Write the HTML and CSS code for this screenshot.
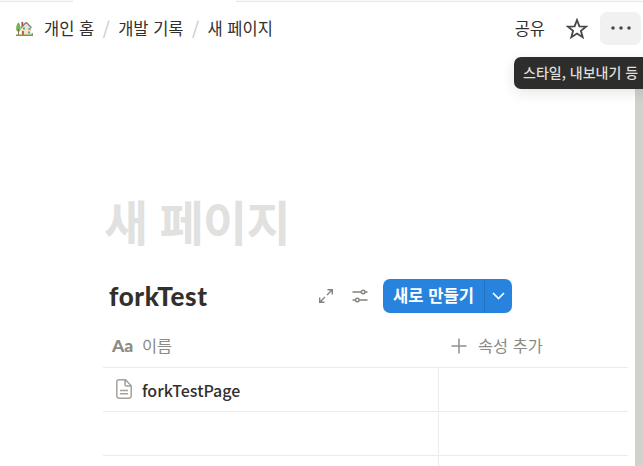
FILE: index.html
```html
<!DOCTYPE html>
<html lang="ko">
<head>
<meta charset="utf-8">
<title>새 페이지</title>
<link rel="stylesheet" href="styles.css">
</head>
<body>
<div class="window">
  <div class="tabs"><span class="tab tab-left"></span><span class="tab tab-right"></span></div>
  <header class="topbar">
    <nav class="crumbs">
      <svg class="house" width="18" height="16" viewBox="0 0 18 16">
        <path d="M5.500 1h1.700v4H5.500z" fill="#a43c55"/>
        <path d="M5 14V7l5-5 5 5v7z" fill="#fbe3b5"/>
        <path d="M5 7l4.500-5h1.500l4.500 5" fill="none" stroke="#78858b" stroke-width="1.300"/>
        <path d="M2.500 1.500C.5 3-.2 6 .3 9c.5 2 3.700 2 4.200 0C5 6 4 3 2.500 1.500z" fill="#77b255"/>
        <path d="M2.500 8v6" stroke="#8a6945"/>
        <path d="M6 10h2v4H6z" fill="#d35c4c"/>
        <path d="M7 6.500h2v2H7zM12.500 7h2v2h-2zM12 10.500h2v2h-2z" fill="#42a5ee"/>
        <path d="M0 13.500h17v1.500H0z" fill="#6ba24c"/>
        <path d="M15.500 12H17v2h-1.500z" fill="#77b255"/>
      </svg>
      <span class="crumb">개인 홈</span><span class="slash">/</span>
      <span class="crumb">개발 기록</span><span class="slash">/</span>
      <span class="crumb">새 페이지</span>
    </nav>
    <div class="actions">
      <span class="share">공유</span>
      <svg class="star" width="22" height="22" viewBox="0 0 22 22"><path d="M11 2l2.400 6.300 6.800.3-5.300 4.200 1.800 6.500L11 15.600l-5.700 3.700 1.800-6.500L1.800 8.600l6.800-.3z" fill="none" stroke="#484743" stroke-width="1.800"/></svg>
      <button class="more" aria-label="더 보기"><svg width="20" height="4" viewBox="0 0 20 4" fill="#4b4a46"><circle cx="2" cy="2" r="1.800"/><circle cx="10" cy="2" r="1.800"/><circle cx="18" cy="2" r="1.800"/></svg></button>
    </div>
    <div class="tooltip">스타일, 내보내기 등</div>
  </header>
  <main class="page">
    <h1>새 페이지</h1>
    <section class="database">
      <div class="toolbar">
        <h2>forkTest</h2>
        <svg class="expand" width="16" height="16" viewBox="0 0 16 16" fill="none" stroke="#85837e" stroke-width="1.400"><path d="M9.500 1.700h4.800v4.800M14 2 9 7M1.700 9.500v4.800h4.800M2 14l5-5"/></svg>
        <svg class="settings" width="16" height="14" viewBox="0 0 16 14" fill="none" stroke="#85837e" stroke-width="1.400"><path d="M.5 3h8.700M13 3h2.500M.5 11h3M7.200 11h8.300"/><circle cx="11.100" cy="3" r="1.800"/><circle cx="5.300" cy="11" r="1.800"/></svg>
        <div class="new"><span class="label">새로 만들기</span><span class="drop"><svg width="13" height="8" viewBox="0 0 13 8"><path d="M1 1l5.500 5.500L12 1" fill="none" stroke="#fff" stroke-width="1.700"/></svg></span></div>
      </div>
      <div class="row head">
        <div class="cell"><span class="aa">Aa</span><span class="name">이름</span></div>
        <div class="cell add"><svg width="16" height="16" viewBox="0 0 16 16"><path d="M8 .5v15M.5 8h15" stroke="#91908b" stroke-width="1.500"/></svg><span>속성 추가</span></div>
      </div>
      <div class="row">
        <div class="cell"><svg class="doc" width="16" height="20" viewBox="0 0 16 20" fill="none" stroke="#a5a29a" stroke-width="1.500"><path d="M3 .8h6.500l5.700 6V17a2.200 2.200 0 0 1-2.200 2.200H3A2.200 2.200 0 0 1 .8 17V3A2.200 2.200 0 0 1 3 .8zM9 1v4.500a1.500 1.500 0 0 0 1.500 1.500H15M4 11.500h8M4 14.700h8"/></svg><span class="title">forkTestPage</span></div>
        <div class="cell"></div>
      </div>
      <div class="row"><div class="cell"></div><div class="cell"></div></div>
      <div class="row"><div class="cell"></div><div class="cell"></div></div>
    </section>
  </main>
  <div class="scrollbar"></div>
</div>
</body>
</html>
```
FILE: styles.css
```css
* { box-sizing: border-box; }
body { margin: 0; background: #fff; font-family: "Noto Sans CJK KR", sans-serif; color: #32302c; }
.window { position: relative; width: 643px; height: 466px; overflow: hidden; }
.tabs { display: flex; justify-content: space-between; height: 2px; }
.tab { background: #f7f7f6; border-bottom: 1px solid #e8e8e7; }
.tab-left { width: 73px; }
.tab-right { width: 407px; }
.topbar { position: relative; display: flex; justify-content: space-between; height: 53px; padding: 0 2px 0 16px; }
.crumbs, .actions { display: flex; align-items: center; height: 53px; font-size: 16.5px; line-height: 24px; white-space: nowrap; }
.crumb, .share { padding-bottom: 2px; }
.house { margin-right: 10px; }
.slash { width: 24px; padding-bottom: 2px; text-align: center; color: #c9c8c5; font-size: 18px; }
.share { margin-right: 21px; }
.star { margin-right: 12px; }
.more { display: flex; align-items: center; justify-content: center; width: 41px; height: 33px; padding: 0; border: 0; border-radius: 7px; background: #f1f1f1; }
.more svg { margin-bottom: 1px; }
.tooltip { position: absolute; z-index: 2; left: 514px; top: 55px; width: 140px; height: 32px; padding-left: 9px; border-radius: 7px; background: #2d2d2b; color: #dededb; font-size: 14px; font-weight: 500; line-height: 31px; white-space: nowrap; box-shadow: 0 4px 14px rgba(0,0,0,.1); }
.page { width: 525px; margin-left: 103px; padding-top: 132px; }
h1 { height: 66px; margin: 0 0 22px 1px; color: #e1e1df; font-size: 48px; line-height: 66px; font-weight: 700; letter-spacing: -.6px; word-spacing: -1px; white-space: nowrap; }
.toolbar { display: flex; align-items: center; height: 42px; }
h2 { width: 215px; margin: 0; padding-left: 6px; font-family: Lato, sans-serif; font-size: 26px; line-height: 34px; font-weight: 900; letter-spacing: .6px; }
.settings { margin: 0 15px 0 18px; }
.new { display: flex; width: 129px; height: 34px; border-radius: 7px; background: #2783de; color: #fff; overflow: hidden; }
.label { width: 101px; text-align: center; font-size: 16.6px; line-height: 33px; font-weight: 700; white-space: nowrap; }
.drop { display: flex; align-items: center; justify-content: center; width: 28px; border-left: 1px solid #2473c3; }
.row { display: grid; grid-template-columns: 336px 189px; height: 44px; border-bottom: 1px solid #ebebea; }
.head { height: 51px; }
.cell { display: flex; align-items: center; min-width: 0; }
.cell:first-child { padding-left: 9px; border-right: 1px solid #ebebea; }
.head .cell:first-child { border-right: 0; }
.head .cell { padding-top: 7px; color: #8c8a85; font-size: 16.4px; }
.head .cell span { margin-top: -1px; }
.head .add { padding-left: 12px; }
.add span { margin-left: 11px; }
.aa { width: 30px; font-family: Lato, sans-serif; font-size: 17.5px; font-weight: 900; }
.doc { margin: -1px 10px 0 4px; }
.title { font-size: 16px; font-weight: 500; line-height: 24px; }
.scrollbar { position: absolute; right: 0; top: 57px; width: 8px; height: 409px; background: #d2d1cc; }
```
